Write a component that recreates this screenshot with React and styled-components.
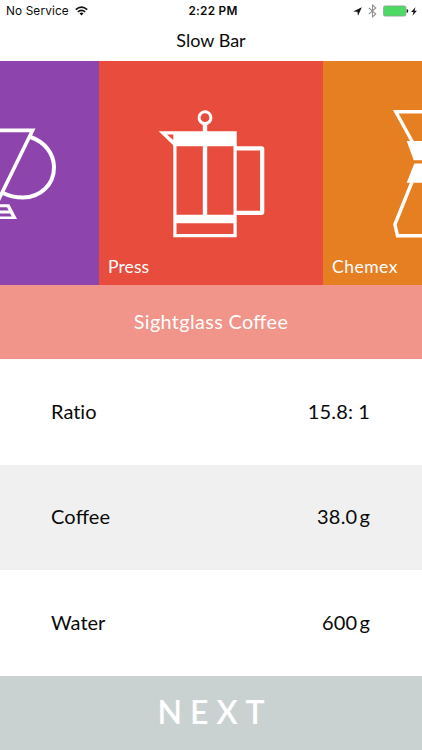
import React from "react";
import styled, { createGlobalStyle } from "styled-components";

const Global = createGlobalStyle`
  * { box-sizing: border-box; }
  body { margin: 0; background: #fff; }
`;

const Screen = styled.main`
  width: 422px;
  height: 750px;
  display: flex;
  flex-direction: column;
  overflow: hidden;
  background: #fff;
  color: #0a0a0a;
  font-family: Lato, "Liberation Sans", sans-serif;
  font-feature-settings: "liga" 1;
`;

const StatusBar = styled.div`
  flex: none;
  height: 22px;
  padding: 0 5px 0 6px;
  display: grid;
  grid-template-columns: 1fr auto 1fr;
  align-items: center;
  font: 400 11.8px/22px Inter, sans-serif;
`;

const StatusGroup = styled.div`
  display: flex;
  align-items: center;
  gap: ${(p) => p.$gap}px;
  justify-content: ${(p) => (p.$end ? "flex-end" : "flex-start")};
  svg { display: block; flex: none; }
`;

const Carrier = styled.span`
  letter-spacing: 0.13px;
`;

const Clock = styled.div`
  padding-left: 3px;
  font-weight: 600;
  letter-spacing: 0.25px;
`;

const TitleBar = styled.h1`
  flex: none;
  height: 39px;
  margin: 0;
  text-align: center;
  font-size: 18px;
  font-weight: 400;
  line-height: 36px;
`;

const Carousel = styled.section`
  flex: none;
  display: flex;
  height: 224px;
  margin-left: -125px;
  width: 672px;
`;

const Tile = styled.article`
  flex: none;
  width: 224px;
  height: 224px;
  background: ${(p) => p.$color};
  display: grid;
  color: #fff;
  > * { grid-area: 1 / 1; }
  svg { display: block; }
`;

const TileName = styled.span`
  align-self: end;
  padding: 0 0 7px 9px;
  font-size: 17.5px;
  line-height: 22px;
  letter-spacing: ${(p) => p.$spacing}px;
`;

const Roaster = styled.div`
  flex: none;
  height: 74px;
  background: #f1948a;
  color: #fff;
  text-align: center;
  font-size: 19.8px;
  line-height: 73px;
  letter-spacing: 0.38px;
`;

const Row = styled.div`
  flex: none;
  height: ${317 / 3}px;
  padding: 0 52px 2px 51px;
  display: flex;
  align-items: center;
  justify-content: space-between;
  background: ${(p) => (p.$shaded ? "#f0f0f0" : "#fff")};
  font-size: 20px;
  line-height: 24px;
`;

const Label = styled.span`
  letter-spacing: ${(p) => p.$spacing}px;
  font-feature-settings: "liga" ${(p) => (p.$ligatures ? 1 : 0)};
`;

const Value = styled.span`
  display: flex;
  gap: ${(p) => p.$gap}px;
  letter-spacing: 0.2px;
`;

const NextButton = styled.button`
  flex: 1;
  border: 0;
  padding: 0 0 1px 8px;
  background: #cad2d1;
  color: #fff;
  font: 600 32px/70px Lato, sans-serif;
  letter-spacing: 8px;
`;

const Wifi = () => (
  <svg width="13" height="10" viewBox="0 0 13 10" fill="none" stroke="#111">
    <path d="M.8 3.7Q6.5-1.4 12.2 3.7" strokeWidth="1.7" />
    <path d="M2.8 5.9Q6.5 2.7 10.2 5.9" strokeWidth="1.6" />
    <path d="M4.5 7.5Q6.5 5.7 8.5 7.5L6.5 9.6Z" fill="#111" stroke="none" />
  </svg>
);

const LocationArrow = () => (
  <svg width="9" height="9" viewBox="0 0 9 9">
    <path d="M8.8.2 5 8.8 4.4 4.8.2 4.5Z" fill="#111" />
  </svg>
);

const Bluetooth = () => (
  <svg width="9" height="14" viewBox="0 0 9 14">
    <path d="M.8 3.8 7.8 10 4.5 12.9V1.1L7.8 4 .8 10.2" fill="none" stroke="#8f8f94" strokeWidth="1.1" />
  </svg>
);

const Battery = () => (
  <svg width="26" height="12" viewBox="0 0 26 12">
    <rect x=".5" y=".9" width="22.4" height="10.2" rx="1.5" fill="#4cd964" stroke="#93a297" strokeWidth=".8" />
    <path d="M23.7 4Q25.3 4.4 25.3 6T23.7 8Z" fill="#111" />
  </svg>
);

const Bolt = () => (
  <svg width="6" height="9" viewBox="0 0 6 9">
    <path d="M4.5.3.1 5.1H2.5L1.4 8.8 5.9 3.7H3.5Z" fill="#111" />
  </svg>
);

const Dripper = () => (
  <svg width="224" height="224" viewBox="-125 61 224 224">
    <path d="M-60.7 130.4H32.6L-2.5 202H-24.5Z" fill="none" stroke="#fff" strokeWidth="3.6" />
    <path d="M30.5 137C45 142 54 154 54 167.5C54 185 40 197.5 23 197.5C15 197.5 9 196 2.5 192.7" fill="none" stroke="#fff" strokeWidth="4" />
    <path d="M-37 204.2H9.3L17 219H-45Z" fill="#fff" />
    <path d="M-33 207.3H7L8.7 210.6H-35ZM-36 213.4H10L11.8 216.4H-38Z" fill="#8e44ad" />
  </svg>
);

const FrenchPress = () => (
  <svg width="224" height="224" viewBox="99 61 224 224">
    <circle cx="205" cy="117.7" r="5.9" fill="none" stroke="#fff" strokeWidth="3" />
    <path d="M202.8 124.5H207.2V216H202.8Z" fill="#fff" />
    <path d="M158.7 131.3H236.7V146.3H173.3V145.3ZM167 134.5 173.3 140V134.5Z" fill="#fff" fillRule="evenodd" />
    <path d="M174.9 145V235.7H235.1V145" fill="none" stroke="#fff" strokeWidth="3.2" />
    <path d="M175 214.7H235V223.3H175Z" fill="#fff" />
    <path d="M236 148.3H261.5Q262.2 148.3 262.2 149V212Q262.2 212.8 261.5 212.8H236" fill="none" stroke="#fff" strokeWidth="4.2" strokeLinejoin="round" />
  </svg>
);

const Chemex = () => (
  <svg width="224" height="224" viewBox="323 61 224 224">
    <path d="M412.5 142 395.8 111.8H475L458 142M412 182 394.9 224.5 397.5 235.7H473L475.5 224.5 458.5 182" fill="none" stroke="#fff" strokeWidth="3.4" />
    <path d="M406.7 141H464L457 160.2H413.7ZM414.3 163.6H456.5L464 182.7H406.7Z" fill="#fff" />
  </svg>
);

const brewers = [
  { color: "#8e44ad", Icon: Dripper, name: "" },
  { color: "#e74c3c", Icon: FrenchPress, name: "Press", spacing: 0.1 },
  { color: "#e67e22", Icon: Chemex, name: "Chemex", spacing: 0.5 },
];

export default function App() {
  return (
    <Screen>
      <Global />
      <StatusBar>
        <StatusGroup $gap={6}>
          <Carrier>No Service</Carrier>
          <Wifi />
        </StatusGroup>
        <Clock>2:22 PM</Clock>
        <StatusGroup $end $gap={6}>
          <LocationArrow />
          <Bluetooth />
          <StatusGroup $gap={2}>
            <Battery />
            <Bolt />
          </StatusGroup>
        </StatusGroup>
      </StatusBar>
      <TitleBar>Slow Bar</TitleBar>
      <Carousel>
        {brewers.map(({ color, Icon, name, spacing }) => (
          <Tile key={color} $color={color}>
            <Icon />
            {name && <TileName $spacing={spacing}>{name}</TileName>}
          </Tile>
        ))}
      </Carousel>
      <Roaster>Sightglass Coffee</Roaster>
      <Row>
        <Label $spacing={0}>Ratio</Label>
        <Value $gap={5}><span>15.8:</span><span>1</span></Value>
      </Row>
      <Row $shaded>
        <Label $spacing={0.2} $ligatures>Coffee</Label>
        <Value $gap={2}><span>38.0</span><span>g</span></Value>
      </Row>
      <Row>
        <Label $spacing={0}>Water</Label>
        <Value $gap={2}><span>600</span><span>g</span></Value>
      </Row>
      <NextButton>NEXT</NextButton>
    </Screen>
  );
}
